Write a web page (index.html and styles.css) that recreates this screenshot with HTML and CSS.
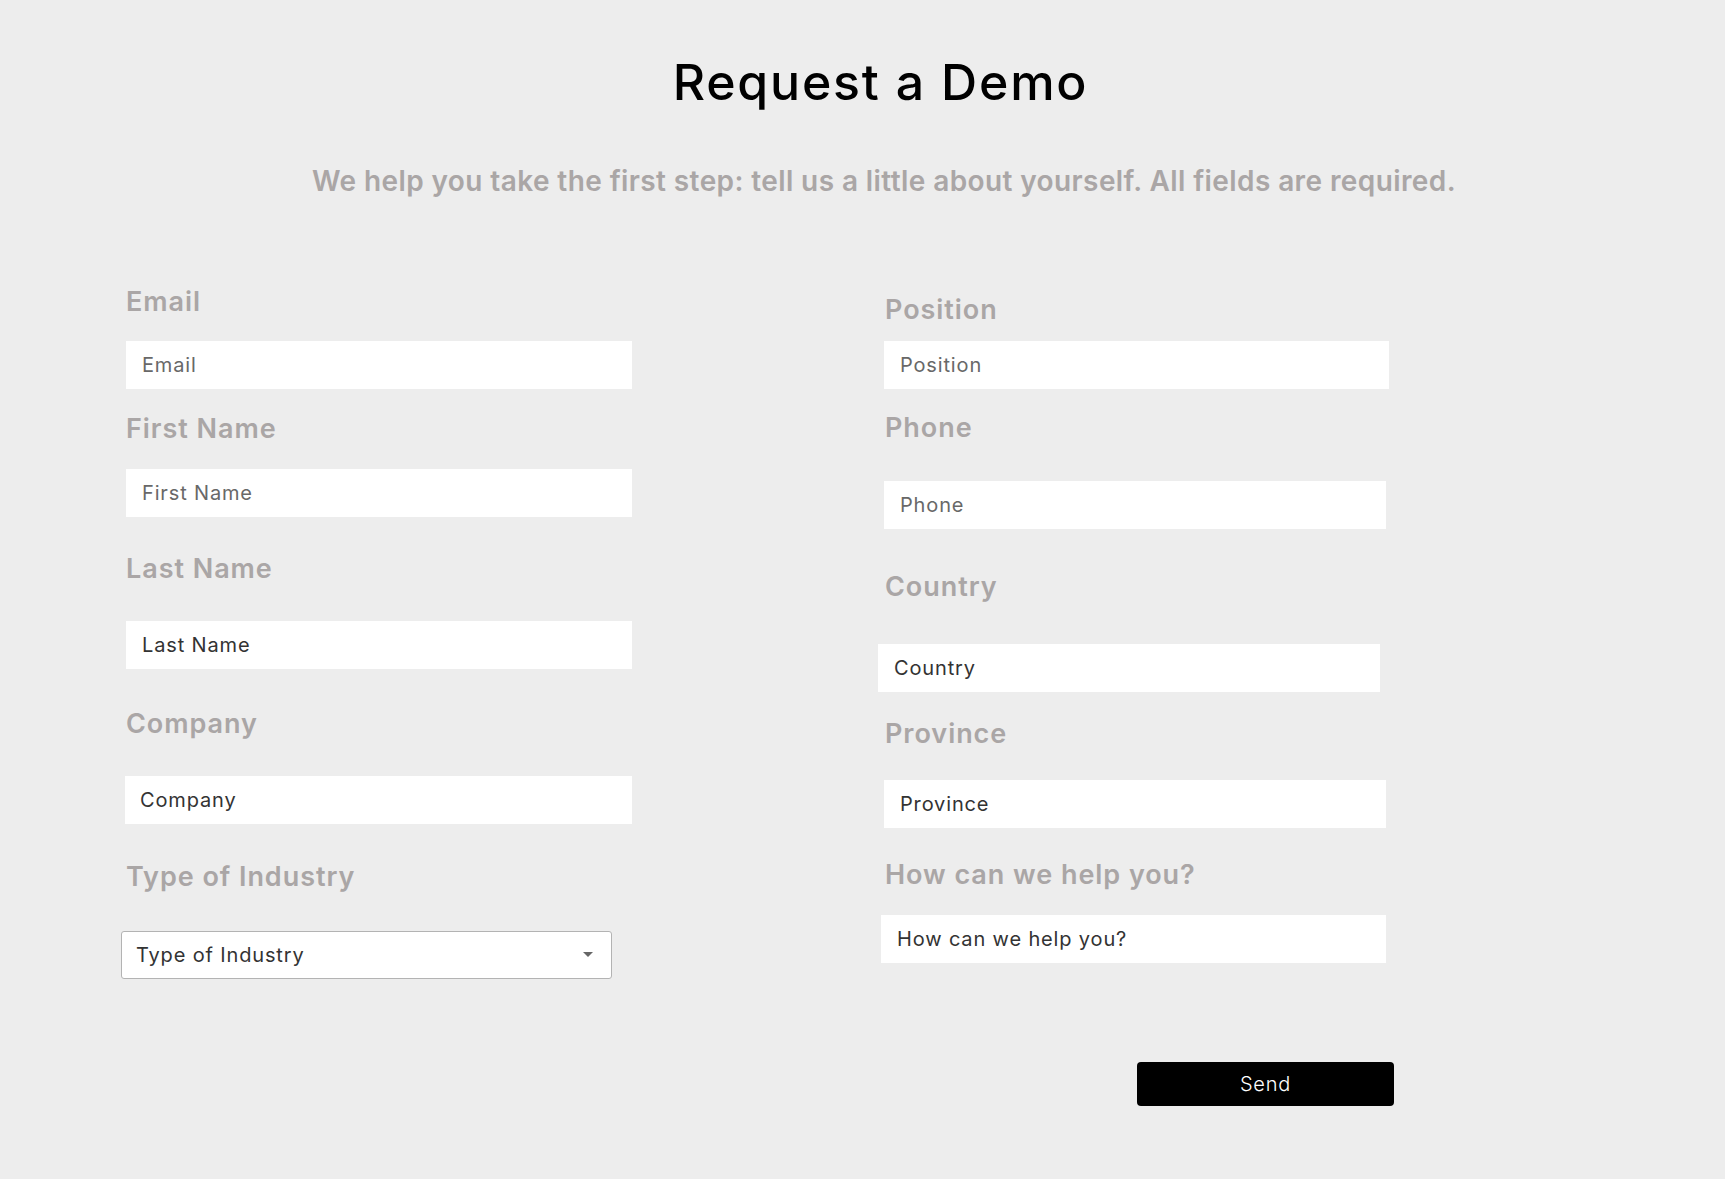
FILE: index.html
```html
<!DOCTYPE html>
<html lang="en">
<head>
<meta charset="utf-8">
<title>Request a Demo</title>
<link rel="stylesheet" href="styles.css">
</head>
<body>
<header class="intro">
  <h1 class="title">Request a Demo</h1>
  <p class="subtitle">We help you take the first step: tell us a little about yourself. All fields are required.</p>
</header>
<form class="form">
  <div class="col col-left">
    <label class="label l-email" for="email">Email</label>
    <input class="field light f-left" id="email" type="email" placeholder="Email">

    <label class="label l-first" for="first">First Name</label>
    <input class="field light f-left" id="first" type="text" placeholder="First Name">

    <label class="label l-last" for="last">Last Name</label>
    <input class="field f-left" id="last" type="text" placeholder="Last Name">

    <label class="label l-company" for="company">Company</label>
    <input class="field f-left f-company" id="company" type="text" placeholder="Company">

    <label class="label l-industry" for="industry">Type of Industry</label>
    <div class="select-wrap">
      <select class="select" id="industry">
        <option>Type of Industry</option>
      </select>
      <svg class="caret" width="10" height="5" viewBox="0 0 10 5"><path d="M0 0h10L5 5z" fill="#666"/></svg>
    </div>
  </div>

  <div class="col col-right">
    <label class="label l-position" for="position">Position</label>
    <input class="field light f-position" id="position" type="text" placeholder="Position">

    <label class="label l-phone" for="phone">Phone</label>
    <input class="field light f-phone" id="phone" type="tel" placeholder="Phone">

    <label class="label l-country" for="country">Country</label>
    <input class="field f-country" id="country" type="text" placeholder="Country">

    <label class="label l-province" for="province">Province</label>
    <input class="field f-province" id="province" type="text" placeholder="Province">

    <label class="label l-help" for="help">How can we help you?</label>
    <input class="field f-help" id="help" type="text" placeholder="How can we help you?">

    <button class="send" type="button">Send</button>
  </div>
</form>
</body>
</html>
```
FILE: styles.css
```css
* { box-sizing: border-box; }

html, body {
  margin: 0;
  padding: 0;
  background: #ededed;
  font-family: Inter, "Open Sans", "DejaVu Sans", sans-serif;
}

.intro {
  padding: 57px 0 0 36px;
  text-align: center;
}

.title {
  margin: 0;
  font-size: 50px;
  line-height: 50px;
  font-weight: 500;
  color: #000;
  letter-spacing: 1.8px;
}

.subtitle {
  margin: 60px 0 0;
  padding-left: 7px;
  font-size: 28px;
  line-height: 28px;
  font-weight: 600;
  color: #aaa6a6;
  letter-spacing: 0.4px;
}

.form {
  display: flex;
  margin-top: 93px;
  padding-left: 121px;
  gap: 246px;
}

.col {
  display: flex;
  flex-direction: column;
  align-items: flex-start;
}

.col-left { width: 511px; }
.col-right { width: 516px; }

.label {
  display: block;
  font-size: 27px;
  line-height: 27px;
  font-weight: 600;
  color: #aaa6a6;
  padding-left: 5px;
  letter-spacing: 0.95px;
}

.field {
  display: block;
  height: 48px;
  border: none;
  border-radius: 0;
  background: #fff;
  padding: 0 16px;
  font-family: inherit;
  font-size: 20px;
  font-weight: 400;
  color: #333;
  outline: none;
  letter-spacing: 0.85px;
}
.field::placeholder { color: #333; opacity: 1; }
.field.light::placeholder { color: #686868; }

.f-left { margin-left: 5px; width: 506px; }
.f-company { padding-left: 15px; margin-left: 4px; width: 507px; }

.l-email { margin-bottom: 26px; }
.l-first { margin-top: 26px; margin-bottom: 27px; }
.l-last { margin-top: 38px; margin-bottom: 39px; }
.l-company { margin-top: 41px; margin-bottom: 39px; }
.l-industry { margin-top: 39px; margin-bottom: 41px; }

.select-wrap {
  position: relative;
  width: 491px;
  height: 48px;
}

.select {
  appearance: none;
  -webkit-appearance: none;
  width: 100%;
  height: 100%;
  border: 1px solid #b3b3b3;
  border-radius: 3px;
  background: #fff;
  padding: 0 14px;
  font-family: inherit;
  font-size: 20px;
  color: #333;
  letter-spacing: 0.85px;
}

.caret {
  position: absolute;
  right: 19px;
  top: 21px;
  pointer-events: none;
}

.l-position { margin-top: 8px; margin-bottom: 18px; padding-left: 7px; }
.l-phone { margin-top: 25px; margin-bottom: 40px; padding-left: 7px; }
.l-country { margin-top: 44px; margin-bottom: 44px; padding-left: 7px; }
.l-province { margin-top: 28px; margin-bottom: 33px; padding-left: 7px; }
.l-help { margin-top: 33px; margin-bottom: 27px; padding-left: 7px; }

.f-position { margin-left: 6px; width: 505px; }
.f-phone { margin-left: 6px; width: 502px; }
.f-country { margin-left: 0; width: 502px; }
.f-province { margin-left: 6px; width: 502px; }
.f-help { margin-left: 3px; width: 505px; }

.send {
  margin-top: 99px;
  margin-left: 259px;
  width: 257px;
  height: 44px;
  border: none;
  border-radius: 4px;
  background: #000;
  color: #fff;
  font-family: inherit;
  font-size: 20px;
  font-weight: 300;
  letter-spacing: 0.8px;
  cursor: pointer;
}
```
